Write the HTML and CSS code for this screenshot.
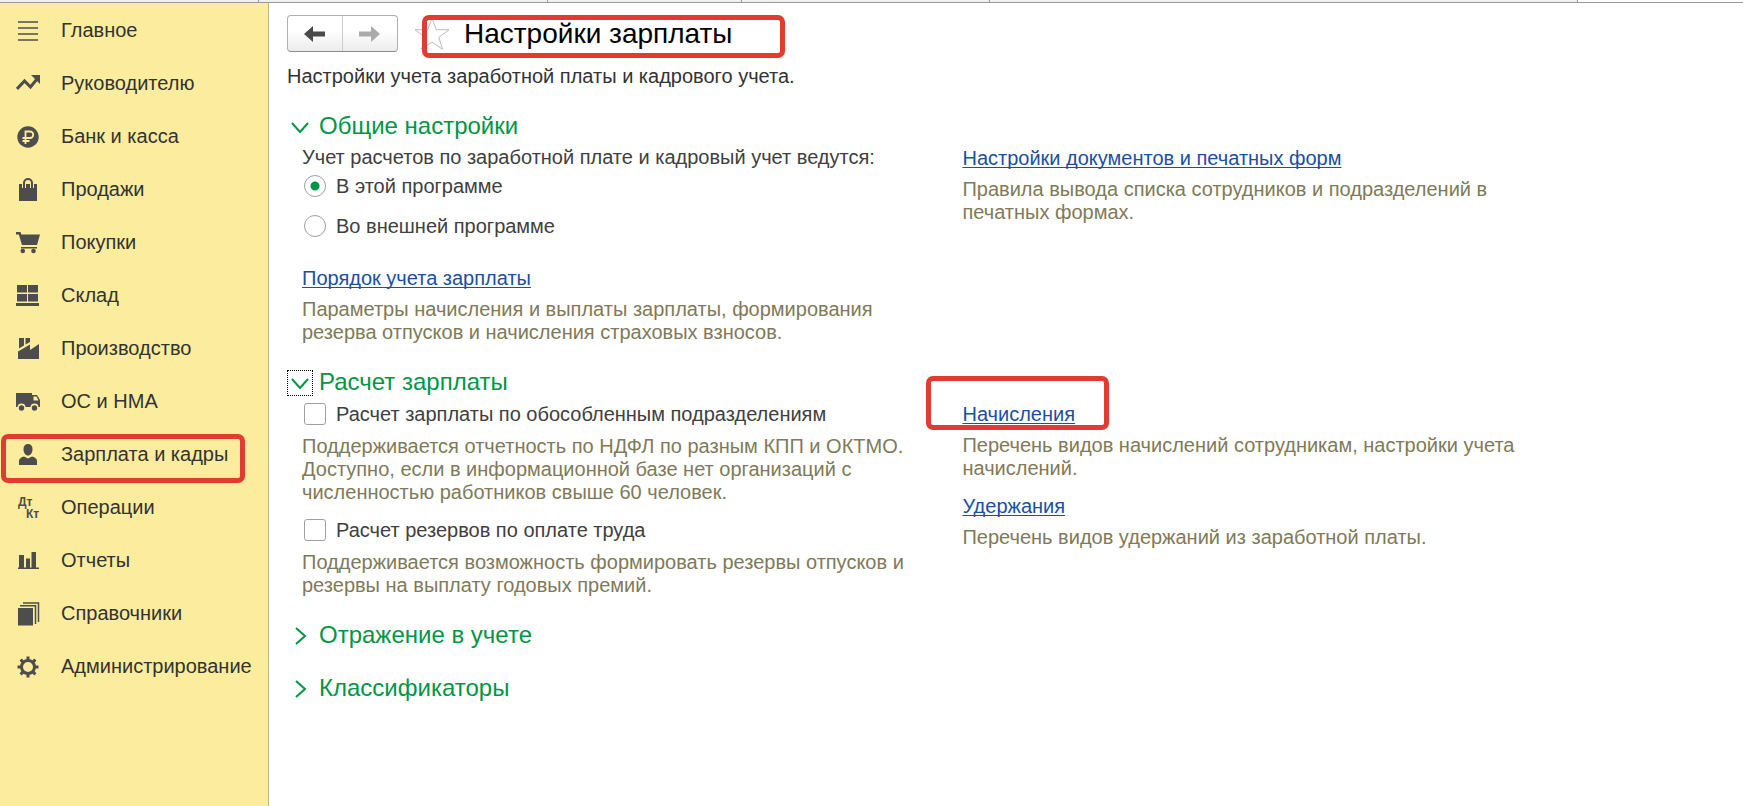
FILE: index.html
```html
<!DOCTYPE html>
<html lang="ru">
<head>
    <meta charset="UTF-8">
    <meta name="viewport" content="width=device-width, initial-scale=1.0">
    <title>Настройки зарплаты</title>
    <link rel="stylesheet" href="styles.css">
</head>
<body>
    <div class="tabs">
        <span></span><span></span><span></span><span></span><span></span><span></span>
    </div>
    <div class="layout">
        <nav class="sidebar">
            <a href="#"><svg viewBox="0 0 24 24"><path d="M2 3h20M2 9h20M2 15h20M2 21h20" fill="none" stroke="#4d4d4d" stroke-width="1.5"/></svg>Главное</a>
            <a href="#"><svg viewBox="0 0 24 24"><path d="M1 17l7.5-8 6 6L21 7" fill="none" stroke="#4d4d4d" stroke-width="3"/><path d="M15 3h9v9z"/></svg>Руководителю</a>
            <a href="#"><svg viewBox="0 0 24 24"><circle cx="12" cy="12" r="10.7"/><path d="M9.5 19V6.500H14a3.200 3.200 0 0 1 0 6.500H6.500M6.500 16h7" fill="none" stroke="#fbec9e" stroke-width="1.8"/></svg>Банк и касса</a>
            <a href="#"><svg viewBox="0 0 24 24"><path d="M3 6h18v17H3z"/><path d="M8 10V5a4 4 0 0 1 8 0v5" fill="none" stroke="#fbec9e" stroke-width="4"/><path d="M8 10V5a4 4 0 0 1 8 0v5" fill="none" stroke="#4d4d4d" stroke-width="2"/></svg>Продажи</a>
            <a href="#"><svg viewBox="0 0 24 24"><path d="M0 1h4.500l.8 2.500H24L21 14H6L2.800 3.500H0z"/><path d="M5 16h16v1.500H5z"/><circle cx="6.8" cy="20" r="2.3"/><circle cx="17.5" cy="20" r="2.3"/></svg>Покупки</a>
            <a href="#"><svg viewBox="0 0 24 24"><path d="M1 1h10v7.500H1zM12 1h10v7.500H12zM1 10h10v7.500H1zM12 10h10v7.500H12zM0 19h23v3H0z"/></svg>Склад</a>
            <a href="#"><svg viewBox="0 0 24 24"><path d="M2 22v-7.500l12-7V13l9-6v15zM3 1h5v7.500l-5 3zM9.500 1H14v4l-4.500 2.500z"/></svg>Производство</a>
            <a href="#"><svg viewBox="0 0 24 24"><path d="M0 3h16v14H0zM16 5h5l3 5v7h-8z"/><path d="M17.500 6.500h3l2 4h-5z" fill="#fbec9e"/><circle cx="5.5" cy="17.5" r="4" fill="#fbec9e"/><circle cx="18.5" cy="17.5" r="4" fill="#fbec9e"/><circle cx="5.5" cy="18" r="2.7"/><circle cx="18.5" cy="18" r="2.7"/></svg>ОС и НМА</a>
            <a href="#" class="marked"><svg viewBox="0 0 24 24"><path d="M12 1c3 0 4.500 2 4.500 5 0 4-2 6.500-4.500 6.500S7.500 10 7.500 6c0-3 1.500-5 4.500-5zM3 22v-4c0-2 1.500-3.500 5-4.500l4 2 4-2c3.500 1 5 2.500 5 4.500v4z"/></svg>Зарплата и кадры</a>
            <a href="#"><span class="dtkt"><b>Дт</b><b>Кт</b></span>Операции</a>
            <a href="#"><svg viewBox="0 0 24 24"><path d="M3 6h5v13H3zM10 9.500h4V19h-4zM15.500 3H20v16h-4.500zM2 18.500h21V20H2z"/></svg>Отчеты</a>
            <a href="#"><svg viewBox="0 0 24 24"><path d="M2 6h15v17.500H2z"/><path d="M4 3.700h15.500V22M7 1h15.500v19" fill="none" stroke="#4d4d4d" stroke-width="1.5"/></svg>Справочники</a>
            <a href="#"><svg viewBox="0 0 24 24"><circle cx="12" cy="12" r="6.5" fill="none" stroke="#4d4d4d" stroke-width="3"/><path d="M12 1.500v4M12 18.500v4M1.500 12h4M18.500 12h4M4.600 4.600l2.800 2.800M16.600 16.600l2.800 2.800M4.600 19.400l2.800-2.800M16.600 7.400l2.800-2.800" fill="none" stroke="#4d4d4d" stroke-width="3"/></svg>Администрирование</a>
        </nav>

        <main class="content">
            <header class="page-header">
                <div class="history">
                    <button type="button" aria-label="Назад"><svg viewBox="0 0 22 16"><path d="M0 8l9-8v5.500h12v5H9V16z" fill="#4a4a4a"/></svg></button>
                    <button type="button" aria-label="Вперед"><svg viewBox="0 0 22 16"><path d="M21 8l-9-8v5.500H0v5h12V16z" fill="#ababab"/></svg></button>
                </div>
                <button type="button" class="star" aria-label="В избранное"><svg viewBox="0 0 36 34"><path d="M18 1l4.200 11.700H35L24.800 20.300l3.800 12L18 25l-10.600 7.300 3.800-12L1 12.700h12.800z" fill="#fff" stroke="#bbb"/></svg></button>
                <h1>Настройки зарплаты</h1>
            </header>
            <p class="intro">Настройки учета заработной платы и кадрового учета.</p>

            <section>
                <h2><button type="button" class="toggle"><span class="arrow"><svg viewBox="0 0 24 24"><path d="M4 8l8 9 8-9"/></svg></span>Общие настройки</button></h2>
                <div class="columns">
                    <div>
                        <fieldset>
                            <legend>Учет расчетов по заработной плате и кадровый учет ведутся:</legend>
                            <label class="option"><input type="radio" name="place" checked>В этой программе</label>
                            <label class="option"><input type="radio" name="place">Во внешней программе</label>
                        </fieldset>
                        <a href="#" class="link">Порядок учета зарплаты</a>
                        <p class="hint">Параметры начисления и выплаты зарплаты, формирования резерва отпусков и начисления страховых взносов.</p>
                    </div>
                    <div>
                        <a href="#" class="link">Настройки документов и печатных форм</a>
                        <p class="hint">Правила вывода списка сотрудников и подразделений в печатных формах.</p>
                    </div>
                </div>
            </section>

            <section>
                <h2><button type="button" class="toggle"><span class="arrow focused"><svg viewBox="0 0 24 24"><path d="M4 8l8 9 8-9"/></svg></span>Расчет зарплаты</button></h2>
                <div class="columns">
                    <div>
                        <label class="check"><input type="checkbox">Расчет зарплаты по обособленным подразделениям</label>
                        <p class="hint">Поддерживается отчетность по НДФЛ по разным КПП и ОКТМО. Доступно, если в информационной базе нет организаций с численностью работников свыше 60 человек.</p>
                        <label class="check"><input type="checkbox">Расчет резервов по оплате труда</label>
                        <p class="hint">Поддерживается возможность формировать резервы отпусков и резервы на выплату годовых премий.</p>
                    </div>
                    <div>
                        <a href="#" class="link marked">Начисления</a>
                        <p class="hint">Перечень видов начислений сотрудникам, настройки учета начислений.</p>
                        <a href="#" class="link">Удержания</a>
                        <p class="hint">Перечень видов удержаний из заработной платы.</p>
                    </div>
                </div>
            </section>

            <section>
                <h2><button type="button" class="toggle"><span class="arrow"><svg viewBox="0 0 24 24"><path d="M8 4l9 8-9 8"/></svg></span>Отражение в учете</button></h2>
            </section>
            <section>
                <h2><button type="button" class="toggle"><span class="arrow"><svg viewBox="0 0 24 24"><path d="M8 4l9 8-9 8"/></svg></span>Классификаторы</button></h2>
            </section>
        </main>
    </div>
</body>
</html>
```
FILE: styles.css
```css
* {
    box-sizing: border-box;
}
body {
    margin: 0;
    min-height: 100vh;
    display: flex;
    flex-direction: column;
    background: #fff;
    color: #404040;
    font-family: "Liberation Sans", Arial, sans-serif;
    font-size: 20px;
    line-height: 23px;
}
button {
    font: inherit;
    color: inherit;
    padding: 0;
    border: none;
    background: none;
    cursor: pointer;
}
h1, h2, p {
    margin: 0;
    font-weight: normal;
}

/* Полоса вкладок */
.tabs {
    display: grid;
    grid-template-columns: 259fr 289fr 194fr 248fr 588fr 165fr;
    height: 3px;
    border-bottom: 1px solid #999;
    background: #f0f0f0;
}
.tabs span {
    border-right: 1px solid #999;
}
.tabs span:last-child {
    border: none;
    background: #fff;
}

.layout {
    display: flex;
    flex: 1;
}

/* Меню разделов */
.sidebar {
    flex: none;
    width: 269px;
    padding-top: 1px;
    background: #fbec9e;
    border-right: 1px solid #bdb58a;
}
.sidebar a {
    position: relative;
    display: flex;
    align-items: center;
    gap: 21px;
    height: 53px;
    padding-left: 16px;
    color: #333;
    text-decoration: none;
}
.sidebar svg, .dtkt {
    width: 24px;
    height: 24px;
    fill: #4d4d4d;
}
.dtkt {
    display: flex;
    flex-direction: column;
    padding-left: 2px;
    color: #4d4d4d;
    font-size: 12px;
    line-height: 12px;
}
.dtkt b + b {
    padding-left: 8px;
}

/* Красные рамки */
.marked, h1 {
    position: relative;
}
.marked::after, h1::after {
    content: "";
    position: absolute;
    border: 5px solid #e03c31;
    border-radius: 7px;
    pointer-events: none;
}
.sidebar .marked::after {
    inset: 6px 23px -2px 1px;
}
.link.marked::after {
    inset: -27px -34px -4px -36px;
}
h1::after {
    inset: -3px -53px -8px -42px;
}

.content {
    flex: 1;
    padding: 12px 0 0 18px;
}
.page-header {
    display: flex;
    align-items: center;
    height: 37px;
}
.history {
    display: flex;
    width: 111px;
    height: 37px;
    border: 1px solid #b0b0b0;
    border-bottom-color: #8c8c8c;
    border-radius: 4px;
    background: linear-gradient(#fff 40%, #ececec);
}
.history button {
    flex: 1;
    display: flex;
    align-items: center;
    justify-content: center;
}
.history button + button {
    border-left: 1px solid #ccc;
}
.history svg {
    width: 22px;
    height: 16px;
}
.star {
    margin-left: 16px;
}
.star svg {
    display: block;
    width: 36px;
    height: 34px;
}
h1 {
    margin-left: 14px;
    color: #000;
    font-size: 28px;
    line-height: 32px;
}
.intro {
    margin: 13px 0 21px;
    color: #333;
}

.toggle {
    display: flex;
    align-items: center;
    gap: 6px;
    color: #009646;
    font-size: 24px;
    line-height: 34px;
}
.arrow {
    width: 26px;
    height: 26px;
    margin-top: 2px;
    border: 1px solid transparent;
}
.arrow.focused {
    border: 1px dotted #000;
}
.arrow svg {
    display: block;
    width: 24px;
    height: 24px;
    fill: none;
    stroke: #009646;
    stroke-width: 2;
}
section {
    margin-bottom: 19px;
}
.columns {
    display: grid;
    grid-template-columns: 11fr 13fr;
    padding-left: 15px;
}

fieldset {
    margin: 0 0 20px;
    padding: 0;
    border: none;
}
legend {
    padding: 3px 0 0;
}
.option, .check {
    display: flex;
    align-items: center;
    gap: 10px;
    padding-left: 2px;
}
.option {
    height: 34px;
}
.option + .option {
    margin-top: 6px;
}
.check {
    height: 30px;
}
input {
    appearance: none;
    width: 22px;
    height: 22px;
    margin: 0;
    border: 1px solid #a0a0a0;
    border-radius: 3px;
    background: #fff;
}
input[type="radio"] {
    border-radius: 50%;
}
input[type="radio"]:checked {
    background: radial-gradient(circle, #009646 4px, #fff 5px);
}
.link {
    display: inline-block;
    margin-top: 4px;
    color: #1a4fa3;
    text-decoration-thickness: 1px;
    text-decoration-skip-ink: none;
    text-underline-offset: 2px;
}
.hint {
    max-width: 610px;
    margin: 6px 0 11px;
    color: #7f7a58;
}
.link + .hint {
    margin-top: 8px;
}
.columns .hint:last-child {
    margin-bottom: 2px;
}
```
